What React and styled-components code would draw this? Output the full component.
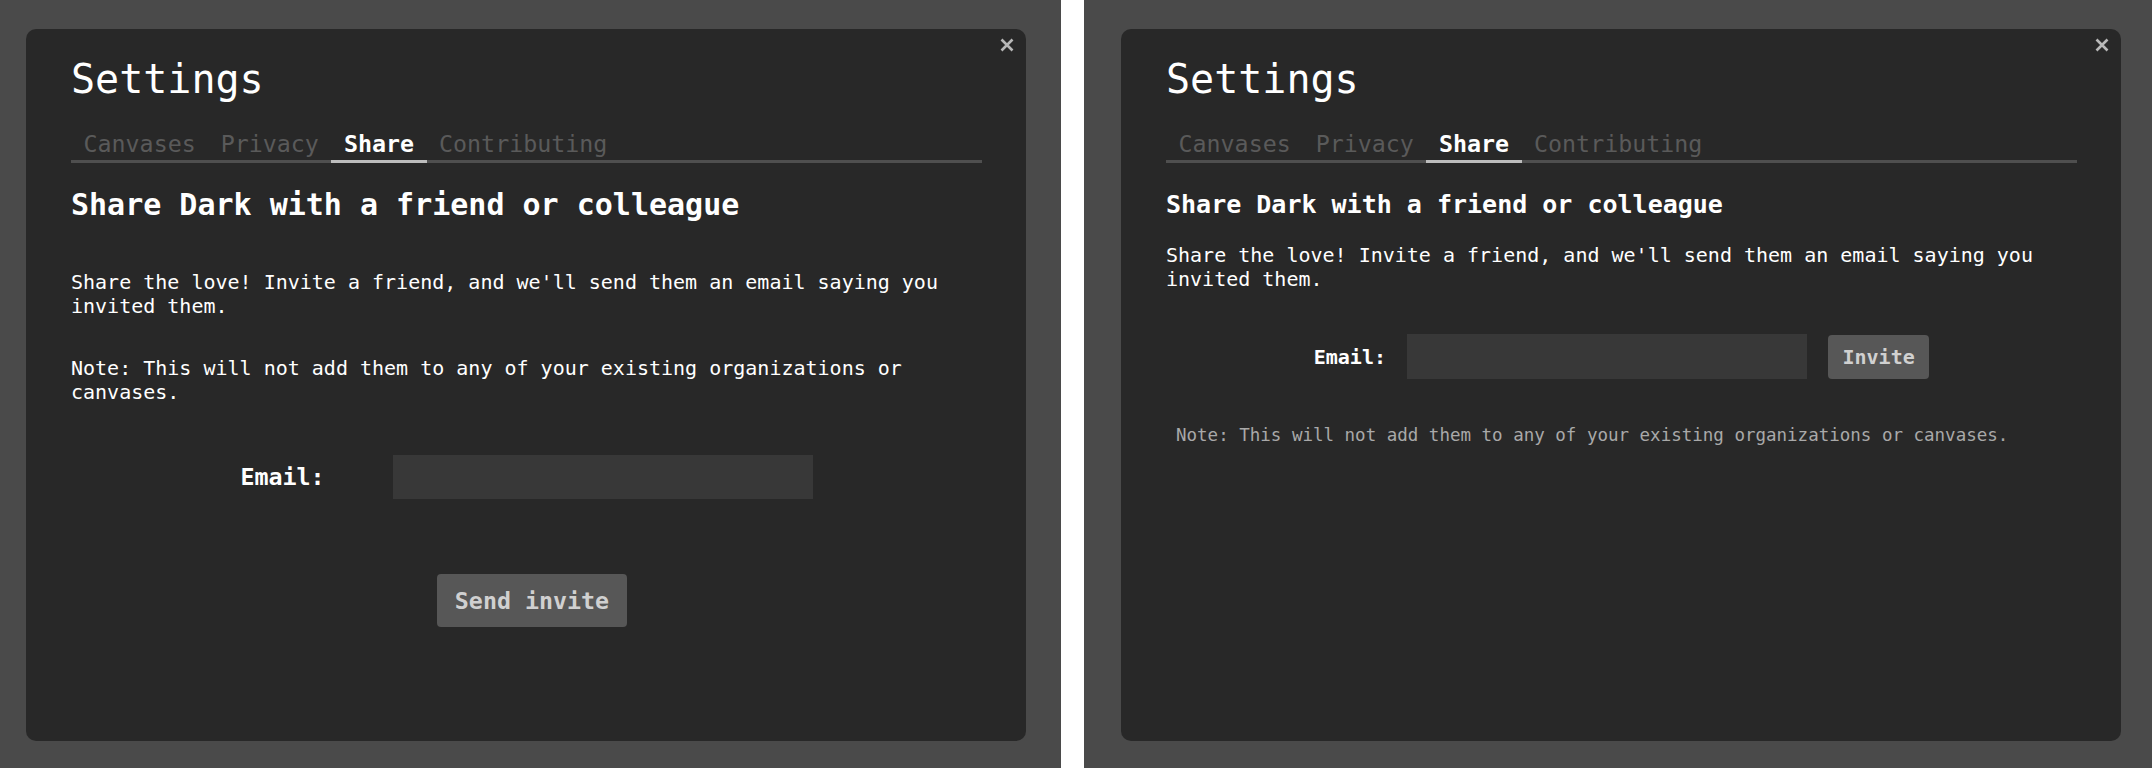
import React from "react";
import styled, { createGlobalStyle } from "styled-components";

// page reset + shared monospace face
const GlobalStyle = createGlobalStyle`
  html, body {
    margin: 0;
    padding: 0;
    background: #4a4a4a;
  }
  body {
    font-family: "DejaVu Sans Mono", "Liberation Mono", monospace;
    overflow: hidden;
  }
`;

const Page = styled.div`
  display: flex;
  width: 2152px;
  height: 768px;
`;

const Panel = styled.div`
  box-sizing: border-box;
  width: ${(p) => p.$width}px;
  height: 100%;
  padding: 29px 0 0 ${(p) => p.$inset}px;
  background: #4a4a4a;
`;

const Divider = styled.div`
  width: 23px;
  height: 100%;
  background: #ffffff;
`;

const Modal = styled.div`
  position: relative;
  box-sizing: border-box;
  width: 1000px;
  height: 712px;
  padding: 26px 44px 0 45px;
  border-radius: 10px;
  background: #282828;
  color: #ffffff;
`;

const CloseButton = styled.button`
  position: absolute;
  top: 9px;
  right: 12px;
  display: flex;
  width: 14px;
  height: 14px;
  padding: 0;
  border: 0;
  background: none;
  color: #b8b8b8;
  cursor: pointer;
`;

const Title = styled.h1`
  margin: 0;
  font-size: 40px;
  line-height: 48px;
  font-weight: 400;
`;

const TabBar = styled.nav`
  display: flex;
  margin-top: 27px;
  border-bottom: 3px solid #4f4f4f;
`;

const Tab = styled.span`
  margin-bottom: -3px;
  padding: 0 12.5px 2px;
  border-bottom: 3px solid ${(p) => (p.$active ? "#bdbdbd" : "transparent")};
  font-size: 23.3px;
  line-height: 28px;
  font-weight: ${(p) => (p.$active ? 700 : 400)};
  color: ${(p) => (p.$active ? "#ffffff" : "#5a5a5a")};
`;

const Heading = styled.h2`
  margin: ${(p) => (p.$compact ? 27 : 24)}px 0 0;
  font-size: ${(p) => (p.$compact ? 25 : 30)}px;
  line-height: ${(p) => (p.$compact ? 30 : 36)}px;
  font-weight: 700;
`;

const Text = styled.p`
  margin: ${(p) => p.$gap}px 0 0;
  font-size: 20px;
  line-height: 24px;
`;

const Note = styled.p`
  margin: 46px 0 0;
  padding-left: 10px;
  font-size: 17.5px;
  line-height: 21px;
  color: #a9a9a9;
`;

const InviteRow = styled.div`
  display: flex;
  align-items: center;
  justify-content: center;
  gap: ${(p) => (p.$compact ? 21 : 68)}px;
  margin-top: ${(p) => (p.$compact ? 43 : 51)}px;
`;

const Label = styled.label`
  font-size: ${(p) => (p.$compact ? 20 : 23.3)}px;
  line-height: ${(p) => (p.$compact ? 24 : 28)}px;
  font-weight: 700;
`;

const EmailInput = styled.input`
  box-sizing: border-box;
  width: ${(p) => (p.$compact ? 400 : 420)}px;
  height: ${(p) => (p.$compact ? 45 : 44)}px;
  padding: 0 10px;
  border: 0;
  outline: none;
  background: #383838;
  color: #ffffff;
  font: inherit;
`;

const ButtonRow = styled.div`
  display: flex;
  justify-content: center;
  margin-top: 75px;
  padding-left: 11px;
`;

const InviteButton = styled.button`
  box-sizing: border-box;
  height: ${(p) => (p.$compact ? 44 : 53)}px;
  padding: 0 ${(p) => (p.$compact ? 14.5 : 18)}px;
  border: 0;
  border-radius: 4px;
  background: #575757;
  color: #d0d0d0;
  font-family: inherit;
  font-size: ${(p) => (p.$compact ? 20 : 23.3)}px;
  font-weight: 700;
  cursor: pointer;
`;

const tabs = ["Canvases", "Privacy", "Share", "Contributing"];

function CloseIcon() {
  return (
    <svg width="14" height="14" viewBox="0 0 14 14">
      <path d="M1.5 1.5 L12.5 12.5 M12.5 1.5 L1.5 12.5" stroke="currentColor" strokeWidth="2.6" />
    </svg>
  );
}

function SettingsModal({ compact }) {
  return (
    <Modal>
      <CloseButton aria-label="Close">
        <CloseIcon />
      </CloseButton>
      <Title>Settings</Title>
      <TabBar>
        {tabs.map((t) => (
          <Tab key={t} $active={t === "Share"}>
            {t}
          </Tab>
        ))}
      </TabBar>
      <Heading $compact={compact}>Share Dark with a friend or colleague</Heading>
      <Text $gap={compact ? 23 : 47}>
        Share the love! Invite a friend, and we'll send them an email saying you invited them.
      </Text>
      {compact ? (
        <>
          <InviteRow $compact>
            <Label $compact>Email:</Label>
            <EmailInput $compact type="text" />
            <InviteButton $compact>Invite</InviteButton>
          </InviteRow>
          <Note>Note: This will not add them to any of your existing organizations or canvases.</Note>
        </>
      ) : (
        <>
          <Text $gap={38}>
            Note: This will not add them to any of your existing organizations or canvases.
          </Text>
          <InviteRow>
            <Label>Email:</Label>
            <EmailInput type="text" />
          </InviteRow>
          <ButtonRow>
            <InviteButton>Send invite</InviteButton>
          </ButtonRow>
        </>
      )}
    </Modal>
  );
}

export default function App() {
  return (
    <>
      <GlobalStyle />
      <Page>
        <Panel $width={1061} $inset={26}>
          <SettingsModal />
        </Panel>
        <Divider />
        <Panel $width={1068} $inset={37}>
          <SettingsModal compact />
        </Panel>
      </Page>
    </>
  );
}
